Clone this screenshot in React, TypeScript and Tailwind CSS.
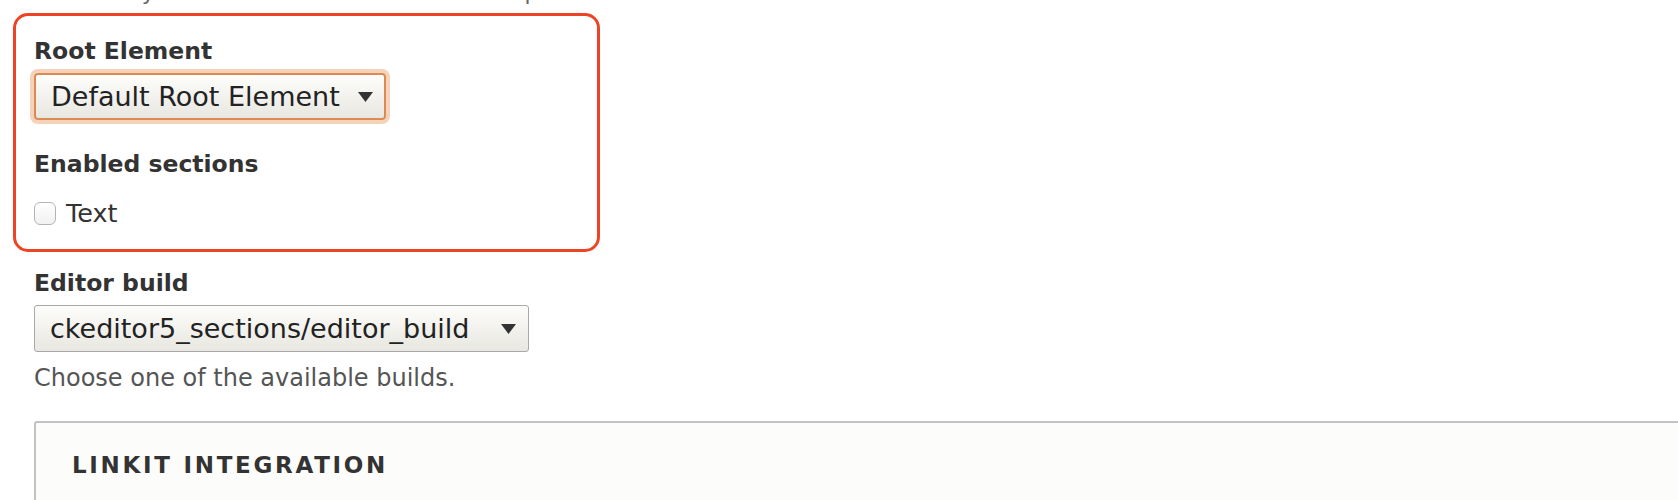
import clsx from 'clsx';

function FieldLabel({ children, className }: { children: React.ReactNode; className?: string }) {
  return <div className={clsx('text-[23.5px] font-bold leading-[28px] text-[#333]', className)}>{children}</div>;
}

function Arrow() {
  return (
    <svg width="15" height="10" viewBox="0 0 15 10" className="shrink-0">
      <path d="M0 0h15L7.5 10z" fill="#333" />
    </svg>
  );
}

function SelectBox({ value, focused, className }: { value: string; focused?: boolean; className?: string }) {
  return (
    <div
      role="combobox"
      className={clsx(
        'flex h-[47px] items-center justify-between bg-linear-to-b from-[#fdfdfb] to-[#e8e7e1] text-[27px] leading-[30px] text-[#222]',
        focused
          ? 'rounded-[4px] border-2 border-[#db8a55] pl-[15px] pr-[11px] shadow-[0_0_0_4px_#f6d3b8]'
          : 'rounded-[3px] border border-[#a9a9a9] pl-[15px] pr-[12px]',
        className,
      )}
    >
      <span className="whitespace-nowrap">{value}</span>
      <Arrow />
    </div>
  );
}

export default function App() {
  return (
    <div className="h-[500px] overflow-hidden bg-white font-['DejaVu_Sans',sans-serif] text-[#333]">
      <div className="-mt-[21px] pl-[34px]">
        {/* tail of the previous field's description, cut off by the crop */}
        <p className="whitespace-nowrap text-[22px] leading-[28px] text-[#666]">
          It is mostly used to define which sections to place.
        </p>

        {/* highlighted block */}
        <div className="-ml-[21px] mt-[6px] w-[587px] rounded-[15px] border-[3px] border-[#ee4426] pb-[22px] pl-[18px] pt-[21px]">
          <FieldLabel>Root Element</FieldLabel>
          <SelectBox value="Default Root Element" focused className="mt-[8px] w-[352px]" />

          <FieldLabel className="mt-[30px]">Enabled sections</FieldLabel>
          <label className="mt-[21px] flex items-center gap-[10px] text-[25.5px] leading-[28px] text-[#333]">
            <span className="h-[23px] w-[22px] rounded-[6px] border border-[#b4b4b4] bg-linear-to-b from-white to-[#f1f1f1]" />
            Text
          </label>
        </div>

        <FieldLabel className="mt-[17px]">Editor build</FieldLabel>
        <SelectBox value="ckeditor5_sections/editor_build" className="mt-[8px] w-[495px]" />
        <p className="mt-[12px] text-[24px] leading-[28px] text-[#555]">Choose one of the available builds.</p>

        <div className="-mr-[20px] mt-[29px] h-[200px] rounded-tl-[3px] border-2 border-[#c2c2c2] bg-[#fcfcfa] pl-[36px] pt-[28px]">
          <div className="text-[23px] font-bold uppercase leading-[28px] tracking-[2.7px] text-[#333]">Linkit integration</div>
        </div>
      </div>
    </div>
  );
}
